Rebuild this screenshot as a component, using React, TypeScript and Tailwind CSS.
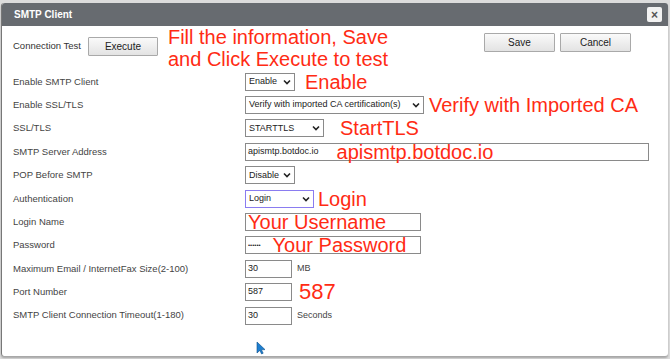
const rows = [
  { label: "Enable SMTP Client" },
  { label: "Enable SSL/TLS" },
  { label: "SSL/TLS" },
  { label: "SMTP Server Address" },
  { label: "POP Before SMTP" },
  { label: "Authentication" },
  { label: "Login Name" },
  { label: "Password" },
  { label: "Maximum Email / InternetFax Size(2-100)" },
  { label: "Port Number" },
  { label: "SMTP Client Connection Timeout(1-180)" },
];

const Caret = () => (
  <svg width="8" height="6" viewBox="0 0 8 6" className="shrink-0">
    <path d="M1 1.5 L4 4.5 L7 1.5" fill="none" stroke="#222" strokeWidth="1.6" />
  </svg>
);

const Select = ({ text, w, purple }: { text: string; w: string; purple?: boolean }) => (
  <div
    className={`flex items-center justify-between h-[18px] px-[3px] bg-white border ${
      purple ? "border-[#8a7cf0]" : "border-[#8a8a8a]"
    } ${w} text-[9px] text-[#222]`}
  >
    <span>{text}</span>
    <Caret />
  </div>
);

const Input = ({ value, w, children }: { value?: string; w: string; children?: React.ReactNode }) => (
  <div className={`flex items-center h-[18px] px-[2px] bg-white border border-[#8a8a8a] ${w} text-[9px] text-[#222]`}>
    {value}
    {children}
  </div>
);

const Note = ({ children, className = "" }: { children: React.ReactNode; className?: string }) => (
  <span className={`text-[20px] leading-none text-[#ff2b14] ${className}`}>{children}</span>
);

const controls = [
  <>
    <Select text="Enable" w="w-[50px]" />
    <Note className="ml-[10px]">Enable</Note>
  </>,
  <>
    <Select text="Verify with imported CA certification(s)" w="w-[179px]" />
    <Note className="ml-[5px]">Verify with Imported CA</Note>
  </>,
  <>
    <Select text="STARTTLS" w="w-[79px]" />
    <Note className="ml-[16px]">StartTLS</Note>
  </>,
  <Input w="w-[404px]">
    <span>apismtp.botdoc.io</span>
    <Note className="ml-[18px]">apismtp.botdoc.io</Note>
  </Input>,
  <Select text="Disable" w="w-[50px]" />,
  <>
    <Select text="Login" w="w-[69px]" purple />
    <Note className="ml-[4px]">Login</Note>
  </>,
  <Input w="w-[176px]">
    <Note>Your Username</Note>
  </Input>,
  <Input w="w-[176px]">
    <span className="text-[6px] tracking-[0px]">••••••</span>
    <Note className="ml-[12px]">Your Password</Note>
  </Input>,
  <>
    <Input value="30" w="w-[47px]" />
    <span className="ml-[5px] text-[9px] text-[#444]">MB</span>
  </>,
  <>
    <Input value="587" w="w-[47px]" />
    <Note className="ml-[7px] text-[22px]">587</Note>
  </>,
  <>
    <Input value="30" w="w-[47px]" />
    <span className="ml-[5px] text-[9px] text-[#444]">Seconds</span>
  </>,
];

const Btn = ({ label, w }: { label: string; w: string }) => (
  <div
    className={`flex items-center justify-center h-[19px] ${w} border border-[#a9a9a9] rounded-[1px] bg-gradient-to-b from-[#fafafa] to-[#e3e3e3] text-[10px] text-[#222]`}
  >
    {label}
  </div>
);

export default function App() {
  return (
    <div
      className="w-[670px] h-[359px] overflow-hidden bg-[#dcdcdc] flex flex-col pt-[3px]"
      style={{ fontFamily: '"Liberation Sans", Arial, sans-serif' }}
    >
      <div className="mx-[1px] mr-[2px] h-[353px] bg-white rounded-[3px] border-l border-[#777] shadow-[0_2px_2px_rgba(0,0,0,0.25)] flex flex-col">
        <div className="h-[23px] bg-[#676b70] rounded-t-[3px] flex items-center justify-between pl-[12px] pr-[6px]">
          <span className="text-[10px] font-bold text-white">SMTP Client</span>
          <div className="w-[15px] h-[15px] bg-[#f2f2f2] rounded-[2px] flex items-center justify-center text-[12px] font-bold text-[#555] leading-none">
            ×
          </div>
        </div>

        <div className="h-[44px] flex items-start pl-[11px] pr-[37px]">
          <div className="flex items-center mt-[11px]">
            <span className="text-[9.5px] text-[#333]">Connection Test</span>
            <div className="ml-[7px]">
              <Btn label="Execute" w="w-[70px]" />
            </div>
          </div>
          <div className="ml-[10px] mt-[0px] flex flex-col items-center text-[20px] leading-[22px] text-[#ff2b14]">
            <span>Fill the information, Save</span>
            <span>and Click Execute to test</span>
          </div>
          <div className="ml-auto mt-[7px] flex gap-[5px]">
            <Btn label="Save" w="w-[71px]" />
            <Btn label="Cancel" w="w-[71px]" />
          </div>
        </div>

        <div className="flex flex-col">
          {rows.map((r, i) => (
            <div key={r.label} className="h-[23.4px] flex items-center">
              <div className="w-[243px] pl-[11px] text-[9.5px] text-[#444]">{r.label}</div>
              <div className="flex items-center">{controls[i]}</div>
            </div>
          ))}
        </div>

        <div className="pl-[254px] pt-[14px]">
          <svg width="10" height="14" viewBox="0 0 10 14">
            <path d="M1 1 L1 12 L3.8 9.4 L5.6 13 L7.2 12.2 L5.4 8.8 L9 8.6 Z" fill="#1e7fd0" stroke="#0b4f8a" strokeWidth="0.6" />
          </svg>
        </div>
      </div>
    </div>
  );
}
